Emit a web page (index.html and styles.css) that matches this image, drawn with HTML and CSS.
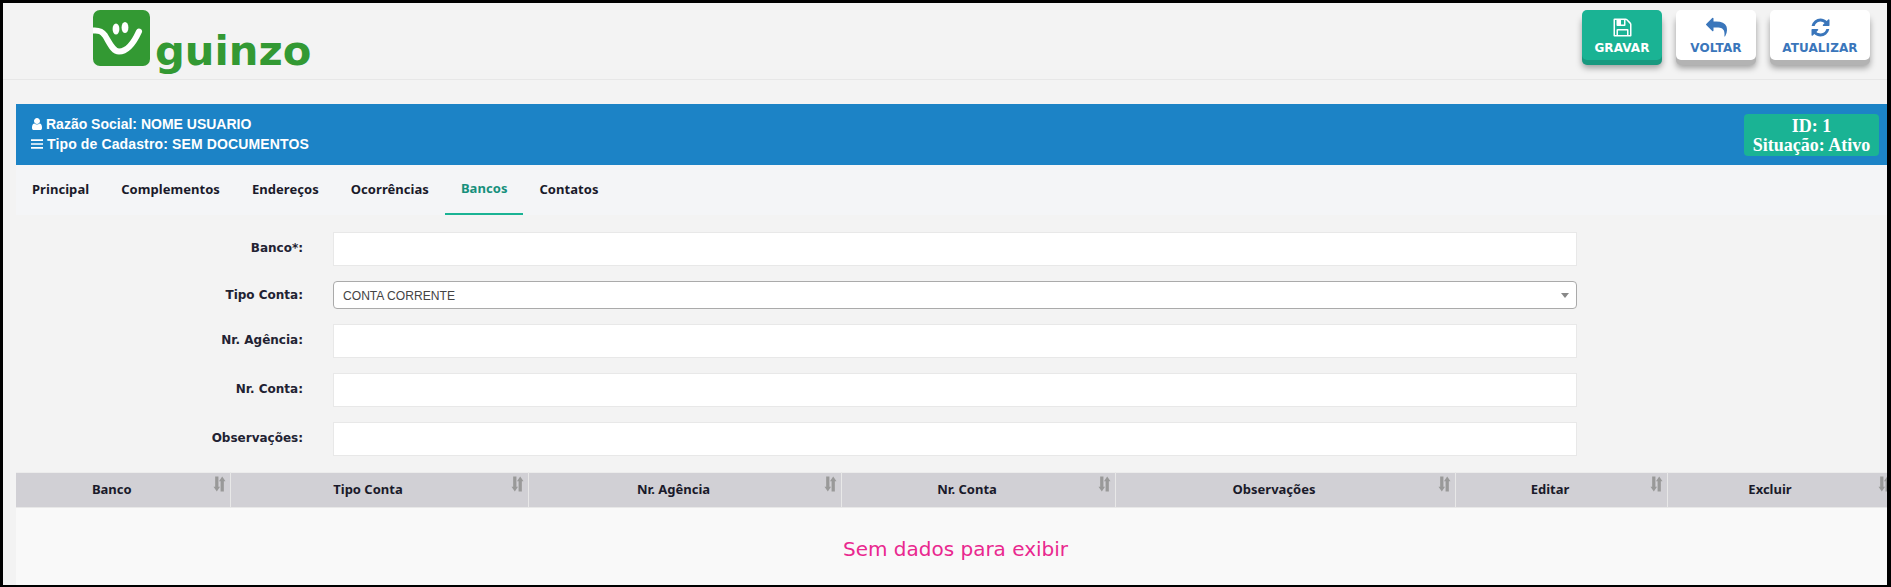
FILE: index.html
```html
<!DOCTYPE html>
<html lang="pt-BR">
<head>
<meta charset="utf-8">
<title>Guinzo - Bancos</title>
<link rel="stylesheet" href="styles.css">
</head>
<body>
<svg class="defs" aria-hidden="true">
  <symbol id="sort" viewBox="0 0 12 14"><path d="M2 0h3v9.500h1.500L3.500 14 .5 9.500H2zM7 14V4.500H5.500L8.500 0l3 4.500H10V14z"/></symbol>
</svg>
<div class="frame">
  <header class="top">
    <div class="brand">
      <svg class="logo-mark" viewBox="0 0 57 56"><rect width="57" height="56" rx="7" fill="#339933"/><path d="M0 20.500c6-.5 9 .5 12 5 5 8 8 16 14 16 9 0 15-9 20-20" fill="none" stroke="#fff" stroke-width="6" stroke-linecap="round"/><ellipse cx="23" cy="19" rx="3.400" ry="5.500" fill="#fff"/><ellipse cx="32" cy="17.500" rx="3.400" ry="5.500" fill="#fff"/></svg>
      <span class="logo-text">guinzo</span>
    </div>
    <div class="actions">
      <button class="btn btn-primary" type="button">
        <svg viewBox="0 0 1792 1792"><path d="M512 1536h768v-384h-768v384zm896 0h128v-896q0-14-10-38.500t-20-34.500l-281-281q-10-10-34-20t-39-10v416q0 40-28 68t-68 28h-576q-40 0-68-28t-28-68v-416h-128v1280h128v-416q0-40 28-68t68-28h832q40 0 68 28t28 68v416zm-384-928v-320q0-13-9.500-22.500t-22.500-9.500h-192q-13 0-22.500 9.500t-9.500 22.500v320q0 13 9.500 22.500t22.500 9.500h192q13 0 22.500-9.500t9.500-22.500zm640 32v928q0 40-28 68t-68 28h-1344q-40 0-68-28t-28-68v-1344q0-40 28-68t68-28h928q40 0 88 20t76 48l280 280q28 28 48 76t20 88z"/></svg>
        <span>GRAVAR</span>
      </button>
      <button class="btn" type="button">
        <svg viewBox="0 0 1792 1792"><path d="M1792 1120q0 166-127 451-3 7-10.500 24t-13.500 30-13 22q-12 17-28 17-15 0-23.500-10t-8.500-25q0-9 2.500-26.500t2.500-23.500q5-68 5-123 0-101-17.500-181t-48.500-138.500-80-101-105.500-69.500-133-42.500-154-21.500-175.500-6h-224v256q0 26-19 45t-45 19-45-19l-512-512q-19-19-19-45t19-45l512-512q19-19 45-19t45 19 19 45v256h224q713 0 875 403 53 134 53 333z"/></svg>
        <span>VOLTAR</span>
      </button>
      <button class="btn btn-wide" type="button">
        <svg viewBox="0 0 1792 1792"><path d="M1639 1056q0 5-1 7-64 268-268 434.500t-478 166.500q-146 0-282.500-55t-243.500-157l-129 129q-19 19-45 19t-45-19-19-45v-448q0-26 19-45t45-19h448q26 0 45 19t19 45-19 45l-137 137q71 66 161 102t187 36q134 0 250-65t186-179q11-17 53-117 8-23 30-23h192q13 0 22.500 9.500t9.500 22.500zm25-800v448q0 26-19 45t-45 19h-448q-26 0-45-19t-19-45 19-45l138-138q-148-137-349-137-134 0-250 65t-186 179q-11 17-53 117-8 23-30 23h-199q-13 0-22.500-9.500t-9.500-22.500v-7q65-268 270-434.500t480-166.500q146 0 284 55.500t245 156.500l130-129q19-19 45-19t45 19 19 45z"/></svg>
        <span>ATUALIZAR</span>
      </button>
    </div>
  </header>

  <main class="content">
    <section class="summary">
      <div class="summary-lines">
        <div class="summary-line"><svg viewBox="0 0 1792 1792"><path d="M1536 1399q0 109-62.500 187t-150.500 78h-854q-88 0-150.500-78t-62.500-187q0-85 8.500-160.500t31.500-152 58.500-131 94-89 134.500-34.500q131 128 313 128t313-128q76 0 134.500 34.500t94 89 58.500 131 31.500 152 8.500 160.500zm-256-887q0 159-112.500 271.500t-271.500 112.500-271.500-112.500-112.500-271.500 112.500-271.500 271.500-112.500 271.500 112.500 112.500 271.500z"/></svg>Razão Social: NOME USUARIO</div>
        <div class="summary-line summary-type"><svg class="bars" viewBox="0 0 14 14"><path d="M0 1.500h14v2H0zM0 6h14v2H0zM0 10.500h14v2H0z"/></svg>Tipo de Cadastro: SEM DOCUMENTOS</div>
      </div>
      <div class="status">ID: 1<br>Situação: Ativo</div>
    </section>

    <nav class="tabs">
      <a class="tab">Principal</a>
      <a class="tab">Complementos</a>
      <a class="tab">Endereços</a>
      <a class="tab">Ocorrências</a>
      <a class="tab tab-active">Bancos</a>
      <a class="tab">Contatos</a>
    </nav>

    <form class="form">
      <div class="row"><label>Banco*:</label><div class="input"></div></div>
      <div class="row row-select"><label>Tipo Conta:</label><div class="select">CONTA CORRENTE<i class="caret"></i></div></div>
      <div class="row"><label>Nr. Agência:</label><div class="input"></div></div>
      <div class="row"><label>Nr. Conta:</label><div class="input"></div></div>
      <div class="row"><label>Observações:</label><div class="input"></div></div>
    </form>

    <div class="table-wrap">
      <table class="grid">
        <colgroup><col class="c1"><col class="c2"><col class="c3"><col class="c4"><col class="c5"><col class="c6"><col class="c7"></colgroup>
        <thead>
          <tr>
            <th>Banco<svg class="sort"><use href="#sort"/></svg></th>
            <th>Tipo Conta<svg class="sort"><use href="#sort"/></svg></th>
            <th>Nr. Agência<svg class="sort"><use href="#sort"/></svg></th>
            <th>Nr. Conta<svg class="sort"><use href="#sort"/></svg></th>
            <th>Observações<svg class="sort"><use href="#sort"/></svg></th>
            <th>Editar<svg class="sort"><use href="#sort"/></svg></th>
            <th>Excluir<svg class="sort"><use href="#sort"/></svg></th>
          </tr>
        </thead>
        <tbody>
          <tr><td class="empty" colspan="7">Sem dados para exibir</td></tr>
        </tbody>
      </table>
    </div>
  </main>
</div>
</body>
</html>
```

FILE: styles.css
```css
* { box-sizing: border-box; }
html, body { margin: 0; padding: 0; }
.defs { width: 0; height: 0; display: block; position: absolute; }
body { width: 1891px; height: 587px; overflow: hidden; background: #f3f3f3; font-family: "DejaVu Sans", sans-serif; }

.frame {
  width: 1891px; height: 587px; overflow: hidden;
  border-style: solid; border-color: #000; border-width: 3px 4px 2px 3px;
  background: #f3f3f3;
}

.top {
  height: 77px; display: flex; justify-content: space-between;
  border-bottom: 1px solid #e7e7e7;
}
.brand { display: flex; padding: 7px 0 0 90px; }
.logo-mark { width: 57px; height: 56px; flex: none; }
.logo-text { font: bold 41.700px/1 "DejaVu Sans", sans-serif; color: #339933; margin: 20px 0 0 5px; }

.actions { display: flex; gap: 14px; padding: 7px 17px 0 0; align-items: flex-start; }
.btn {
  width: 80px; height: 50px; margin-bottom: 5px; padding: 7px 0 0; border: 0; border-radius: 5px;
  background: #fff; color: #3a76bb;
  box-shadow: 0 5px 0 #b3b3b3, 0 8px 6px rgba(0,0,0,.35);
  display: flex; flex-direction: column; align-items: center;
  font: bold 12px/14px "DejaVu Sans", sans-serif; letter-spacing: .1px;
}
.btn svg { width: 21px; height: 21px; fill: currentColor; margin-bottom: 3px; }
.btn-primary { background: #1ab394; color: #fff; box-shadow: 0 5px 0 #18997f, 0 8px 6px rgba(0,0,0,.35); }
.btn-wide { width: 100px; }

.content { padding-left: 13px; }

.summary {
  margin-top: 24px; height: 61px; background: #1c83c6; color: #fff;
  display: flex; justify-content: space-between; align-items: center;
  padding: 0 8px 0 14px;
}
.summary-lines { font: bold 14px/20px "Liberation Sans", sans-serif; margin-top: -1px; }
.summary-line { display: flex; align-items: center; }
.summary-type { letter-spacing: .13px; }
.summary-line svg { width: 14px; height: 14px; fill: #fff; margin-right: 2px; flex: none; }
.summary-line .bars { width: 12px; margin: 0 4px 0 1px; }
.status {
  width: 135px; height: 42px; background: #1ab394; border-radius: 4px; text-align: center;
  font: bold 18px/19px "Liberation Serif", serif; padding-top: 3px;
}

.tabs { height: 50px; display: flex; background: #f4f5f7; }
.tab {
  padding: 0 16px; height: 50px; color: #1a1a2a; letter-spacing: .05px;
  font: bold 13px/49px "Noto Sans", sans-serif; border-bottom: 2px solid transparent;
}
.tab-active { color: #16907c; border-bottom-color: #1ab394; line-height: 46px; }

.form { padding-top: 17px; height: 257px; display: flex; flex-direction: column; gap: 15px; }
.row { display: flex; align-items: center; }
.row label {
  width: 287px; padding-bottom: 2px; text-align: right; color: #222232; font: bold 12px/1 "DejaVu Sans", sans-serif;
}
.row-select label { padding-bottom: 0; }
.input { margin-left: 30px; width: 1244px; height: 34px; background: #fff; border: 1px solid #e8e8e8; }
.select {
  margin-left: 30px; width: 1244px; height: 28px; background: #fff; border: 1px solid #aaa; border-radius: 4px;
  position: relative; padding-left: 9px; font: 12.100px/28px "Liberation Sans", sans-serif; color: #444;
}
.caret {
  position: absolute; right: 7px; top: 11px; width: 0; height: 0;
  border-left: 4px solid transparent; border-right: 4px solid transparent; border-top: 5px solid #888;
}

.table-wrap { overflow: hidden; }
.grid { table-layout: fixed; width: 1879px; border-collapse: collapse; }
.c1 { width: 214px; } .c2 { width: 298px; } .c3 { width: 313px; } .c4 { width: 274px; }
.c5 { width: 340px; } .c6 { width: 212px; } .c7 { width: 228px; }
.grid th {
  position: relative; height: 35px; padding: 0 22px 2px 0; background: #d1d0d5; color: #1a1a2a;
  border-right: 1px solid #e8e8e8; border-bottom: 1px solid #e8e8e8; border-top: 1px solid #ececec;
  font: bold 13px/1 "Noto Sans", sans-serif; text-align: center;
}
.sort { position: absolute; right: 4px; top: 3px; width: 13px; height: 16px; fill: #999; }
.empty { background: #f9f9f9; height: 84px; padding: 0 0 2px; text-align: center; color: #e9288f; font: 20px/1 "DejaVu Sans", sans-serif; }
```
